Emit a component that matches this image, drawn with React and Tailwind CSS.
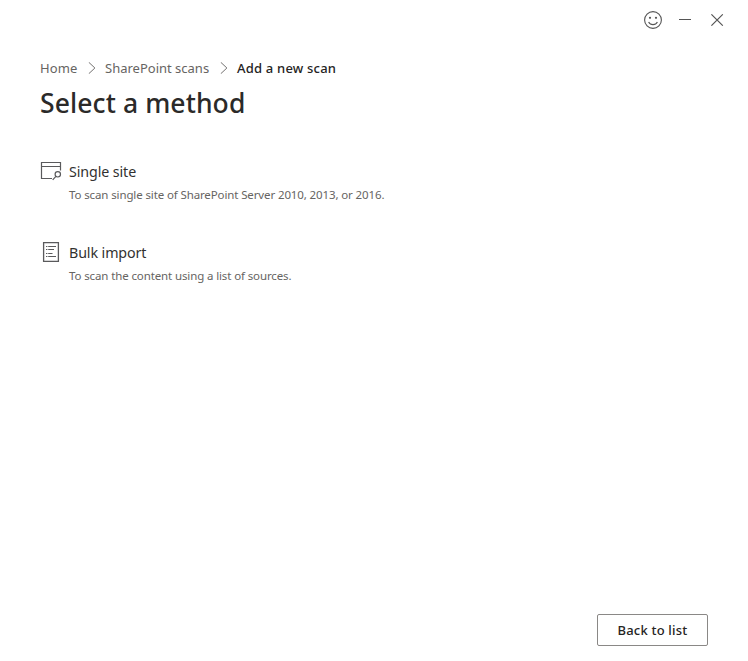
import React from "react";

function Chevron() {
  return (
    <svg className="h-3 w-2 shrink-0" viewBox="0 0 8 12" fill="none" stroke="#737170" strokeWidth="1">
      <path d="M0.8 0.3 6.9 6 0.8 11.7" />
    </svg>
  );
}

function SiteIcon() {
  return (
    <svg className="h-5 w-[22px] shrink-0" viewBox="0 0 22 20" fill="none" stroke="#5a5a5c" strokeWidth="1.2">
      <path d="M12 17.5H1.5V1.5H20.5V9.5M1.5 5.5H20.5" />
      <circle cx="17.8" cy="13.3" r="2.7" />
      <path d="M15.9 15.3 12.7 18.8" />
    </svg>
  );
}

function ListIcon() {
  return (
    <svg className="h-5 w-[22px] shrink-0" viewBox="0 0 22 20" fill="none" stroke="#5a5a5c">
      <rect x="3.6" y="0.6" width="14.8" height="18.8" strokeWidth="1.3" />
      <path d="M8.2 4.5H16M8.2 7.5H14M8.2 11.5H12.5M8.2 14.5H16" strokeWidth="1.2" />
      <path d="M6 4.5H7.4M6 7.5H7.4M6 11.5H7.4M6 14.5H7.4" strokeWidth="1.2" />
    </svg>
  );
}

function Method({ icon, title, text }) {
  return (
    <div className="flex h-[81px] gap-[7px]">
      {icon}
      <div className="pt-px whitespace-nowrap">
        <div className="text-[14.25px] leading-5 tracking-[-0.1px] text-[#323130]">{title}</div>
        <div className="mt-[5px] text-[11.5px] leading-4 tracking-[-0.12px] text-[#666462]">{text}</div>
      </div>
    </div>
  );
}

export default function App() {
  return (
    <div className="flex h-[661px] w-[748px] flex-col bg-white font-['Segoe_UI','Noto_Sans',sans-serif]">
      <header className="flex h-10 shrink-0 items-center justify-end pr-6">
        <svg className="size-[18px]" viewBox="0 0 18 18" fill="none" stroke="#555" strokeWidth="1.1">
          <circle cx="9" cy="9" r="8.4" />
          <path d="M4.6 10.9C5.5 12.7 7 13.6 9 13.6S12.5 12.7 13.4 10.9" />
          <circle cx="6" cy="6.8" r="1.1" fill="#555" stroke="none" />
          <circle cx="12" cy="6.8" r="1.1" fill="#555" stroke="none" />
        </svg>
        <svg className="ml-[14px] h-3 w-[18px]" viewBox="0 0 18 12" stroke="#555" strokeWidth="1">
          <path d="M3 5.5H15" />
        </svg>
        <svg className="ml-4 h-3 w-[14px]" viewBox="0 0 14 12" stroke="#555" strokeWidth="1.1">
          <path d="M1.4 0.3 12.8 11.7M12.8 0.3 1.4 11.7" />
        </svg>
      </header>
      <main className="grow px-10 pt-[18px]">
        <nav className="flex h-5 items-center whitespace-nowrap text-[13px] leading-5 text-[#666462]">
          <span className="w-[48px] tracking-[0.1px]">Home</span>
          <Chevron />
          <span className="ml-[9px] w-[114.5px]">SharePoint scans</span>
          <Chevron />
          <span className="ml-[9.5px] font-medium tracking-[0.2px] text-[#252423]">Add a new scan</span>
        </nav>
        <h1 className="mt-[7px] whitespace-nowrap text-[26.5px] leading-9 font-medium tracking-[0.1px] text-[#2b2a29]">
          Select a method
        </h1>
        <section className="mt-10">
          <Method
            icon={<SiteIcon />}
            title="Single site"
            text="To scan single site of SharePoint Server 2010, 2013, or 2016."
          />
          <Method
            icon={<ListIcon />}
            title="Bulk import"
            text="To scan the content using a list of sources."
          />
        </section>
      </main>
      <footer className="flex shrink-0 justify-end pr-10 pb-[15px]">
        <button className="flex h-8 w-[111px] items-center justify-center rounded-[2px] border border-[#8a8886] pt-[2px] text-[13px] font-medium tracking-[0.2px] whitespace-nowrap text-[#252423]">
          Back to list
        </button>
      </footer>
    </div>
  );
}
